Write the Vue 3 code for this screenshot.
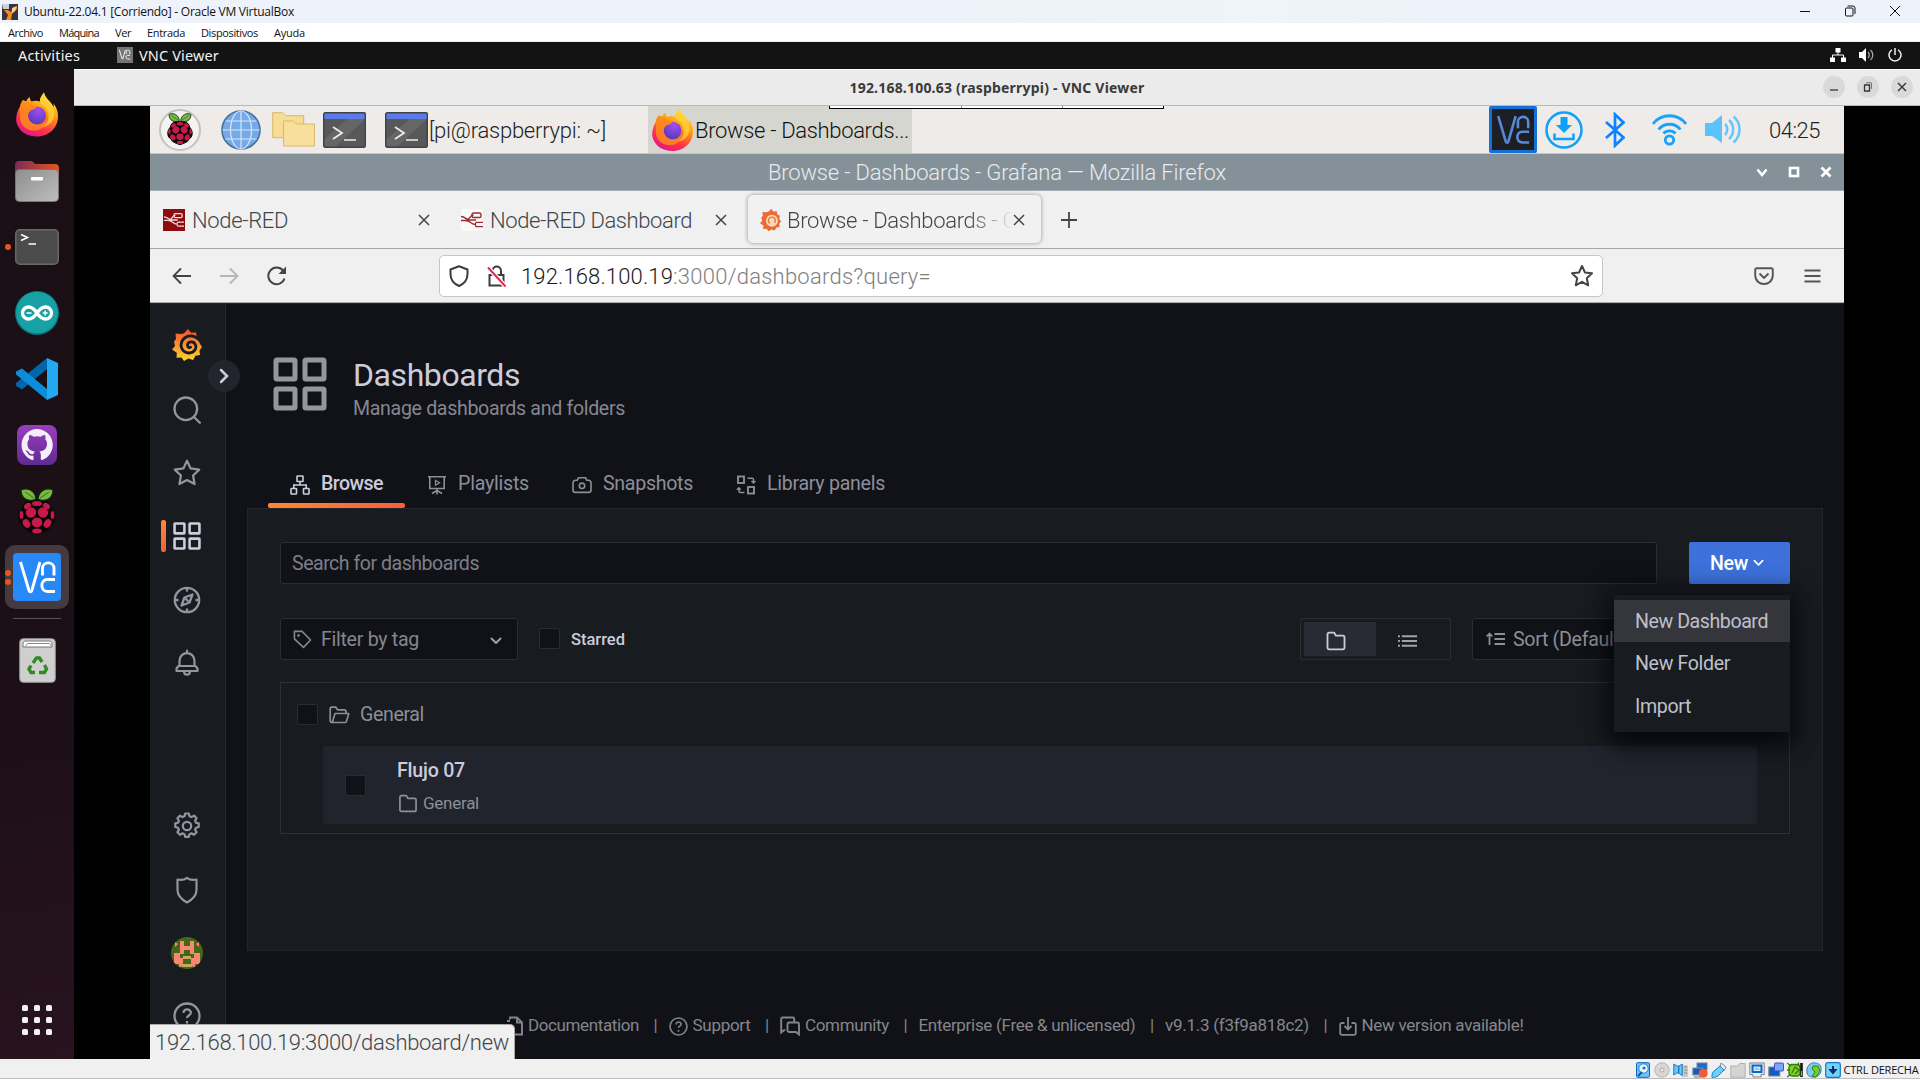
<script setup>
// Sets the advance width of a label by distributing letter spacing over its glyphs.
const vFit = {
  mounted(el, { value }) {
    el.style.display = 'inline-block'
    el.style.whiteSpace = 'nowrap'
    el.style.flex = 'none'
    const natural = el.getBoundingClientRect().width
    const count = el.textContent.trim().length
    el.style.letterSpacing = (value - natural) / count + 'px'
  }
}

const menus = [
  ['Archivo', 35, 16], ['Máquina', 40, 16], ['Ver', 16, 16],
  ['Entrada', 38, 16], ['Dispositivos', 57, 16], ['Ayuda', 31, 0]
].map(([label, width, gap]) => ({ label, width, gap }))

const pageTabs = [
  { label: 'Browse', icon: 'g-sitemap', w: 62, active: true },
  { label: 'Playlists', icon: 'g-present', w: 71 },
  { label: 'Snapshots', icon: 'g-camera', w: 90 },
  { label: 'Library panels', icon: 'g-library', w: 118 }
]

const navTop = ['g-search', 'g-star', 'g-apps', 'g-compass', 'g-bell']
const navBottom = ['g-gear', 'g-shield']
const menuItems = [['New Dashboard', 133], ['New Folder', 95], ['Import', 56]]
const vmIcons = ['v-disk', 'v-cd', 'v-audio', 'v-net', 'v-usb', 'v-folder', 'v-screen', 'v-rec', 'v-cpu', 'v-mouse', 'v-key']
</script>

<template>
  <div class="vm">
    <svg class="defs" aria-hidden="true">
      <defs>
        <linearGradient id="ffo" x1=".8" y1="0" x2=".3" y2="1"><stop offset="0" stop-color="#fff44f" /><stop offset=".4" stop-color="#ff980e" /><stop offset=".72" stop-color="#ff3647" /><stop offset="1" stop-color="#e31587" /></linearGradient>
        <radialGradient id="ffp" cx=".6" cy=".2" r=".9"><stop offset="0" stop-color="#a44cf0" /><stop offset="1" stop-color="#4a3ab8" /></radialGradient>
        <linearGradient id="graf" x1="0" y1="1" x2="0" y2="0"><stop offset="0" stop-color="#fcd71f" /><stop offset=".4" stop-color="#fba03b" /><stop offset="1" stop-color="#f1502a" /></linearGradient>
        <linearGradient id="fold" x1="0" y1="0" x2="1" y2="1"><stop offset="0" stop-color="#8e8e8e" /><stop offset="1" stop-color="#bdbdbd" /></linearGradient>
        <linearGradient id="foldb" x1="0" y1="0" x2="1" y2="0"><stop offset="0" stop-color="#7b2a55" /><stop offset="1" stop-color="#e95420" /></linearGradient>
        <linearGradient id="gith" x1="0" y1="0" x2="0" y2="1"><stop offset="0" stop-color="#9a3ebd" /><stop offset="1" stop-color="#5f2a90" /></linearGradient>
      </defs>
      <symbol id="firefox" viewBox="0 0 42 44">
        <path d="M28 0c-3 4-4.500 6-4 9-3-1-6-1-8.500 0-1-1-2-3-1.500-4.500-2 .8-3 2.500-3.500 4-1.500 0-2.500-.5-3.500-1C5.500 9 4.500 11 4 14c-3 5-4.500 11-3.500 16C3 39 11 44 21 44c12 0 21-9 21-20 0-6-2-10-4.500-13 .3 1.500.3 2.500 0 3.500C35.500 9 29 6 28 0z" fill="url(#ffo)" />
        <path d="M28 0c-3 4-4.500 7-3.500 11 5 3 8 7 8 13 0 6-4 10-8 11 9-1 14-7 14-14 0-3-1-5-2-7C34 9 29 6 28 0z" fill="#ffd43a" opacity=".75" />
        <circle cx="21" cy="23" r="9" fill="url(#ffp)" />
        <path d="M5 11c4-2 8-2 11 1 1.500 1.200 3.500 1.300 5 2-1 3-4 3-6 4-2 1.500-3 3-3 5 0 6 5 9 9 9 5 0 8-2 10-6-1 8-6 12-13 12C9 38 3 31 4 22c0-4 0-8 1-11z" fill="#ff8a1f" opacity=".85" />
      </symbol>
      <symbol id="raspberry" viewBox="0 0 38 48">
        <path d="M19 12C13 9 5 14 4 21c-5 5-5 13 1 17 3 6 9 7 14 9 5-2 11-3 14-9 6-4 6-12 1-17-1-7-9-12-15-9z" fill="#0a0508" />
        <path d="M18 11C15 13 9 13 6 10 4 8 3 5 3 2c6-3 14 0 15 9zM20 11c3 2 9 2 12-1 2-2 3-5 3-8-6-3-14 0-15 9z" fill="#75b843" stroke="#12280a" stroke-width="1.200" />
        <path d="M7 4l9 6M31 4l-9 6" stroke="#2f5c1c" stroke-width=".8" />
        <g fill="#c51a4a"><ellipse cx="19" cy="15.500" rx="5" ry="2.600" /><ellipse cx="9.500" cy="18" rx="3.800" ry="2.800" transform="rotate(-35 9.500 18)" /><ellipse cx="28.500" cy="18" rx="3.800" ry="2.800" transform="rotate(35 28.500 18)" /><ellipse cx="13" cy="24.500" rx="5" ry="5.300" transform="rotate(30 13 24.500)" /><ellipse cx="25" cy="24.500" rx="5" ry="5.300" transform="rotate(-30 25 24.500)" /><ellipse cx="3.500" cy="27" rx="1.900" ry="4" /><ellipse cx="34.500" cy="27" rx="1.900" ry="4" /><ellipse cx="19" cy="34.500" rx="5.300" ry="4.800" /><ellipse cx="8.500" cy="35.500" rx="3.400" ry="4.600" transform="rotate(-35 8.500 35.500)" /><ellipse cx="29.500" cy="35.500" rx="3.400" ry="4.600" transform="rotate(35 29.500 35.500)" /><ellipse cx="19" cy="43" rx="4.800" ry="2.500" /></g>
      </symbol>
      <symbol id="vnc" viewBox="0 0 48 48"><path d="M7.500 9l8.500 28.500c.6 1.700 2.200 1.700 2.800 0L27 9M29.500 22.500v-7c0-7.500 11.500-7.500 11.500 0v7M42 26.500h-7.500c-7.500 0-7.500 12 0 12H42" fill="none" stroke="currentColor" stroke-width="2.900" /></symbol>
      <symbol id="piterm" viewBox="0 0 43 36"><rect x=".7" y=".7" width="41.600" height="34.600" rx="1.500" fill="#585858" /><path d="M.7 28L32 0h10.300v7L12 35H.7z" fill="#707070" opacity=".6" /><path d="M1 1h41v6H1z" fill="#5b7be8" /><rect x=".7" y=".7" width="41.600" height="34.600" rx="1.500" fill="none" stroke="#3f4247" stroke-width="1.400" /><path d="M10 15l9 6-9 6M21 28h12" fill="none" stroke="#eee" stroke-width="1.700" /></symbol>
      <symbol id="nodered" viewBox="0 0 22 22"><path d="M0 11.500h4.500c4.500 0 4-5.500 8-5.500M4.500 11.500c5 0 5 4 9.500 4M0 7.500c4 0 5 3 8 3.500h7" fill="none" stroke="currentColor" stroke-width="1.400" /><rect x="11" y="4" width="9" height="4.500" rx="1.500" fill="none" stroke="currentColor" stroke-width="1.400" /><path d="M22 13.300h-6.500c-1.500 0-1.500 4.400 0 4.400H22" fill="none" stroke="currentColor" stroke-width="1.300" /></symbol>
      <symbol id="grafana" viewBox="0 0 30 32">
        <path d="M16 0l3 3.800 5-.3.800 4.500 3.700 2-1 4L30 18l-2.500 3.500L28 26l-4.500.8L21 31l-4.500-1.500L12 32l-2.500-3.500-5 .3.300-5L0 20.500 3 17l-1-4.500L4 10l-.5-5.500 5.500.5 3-.8z" fill="url(#graf)" />
        <path d="M29 13C24 5.500 15.500 5.500 11.500 10c-5 5.500-1.800 14 5.500 14 5.500 0 8-5 6.300-8.500-1.800-3.800-7.300-3.200-7.800.5-.2 2 1.700 3.200 3 2.200" fill="none" stroke="#181b1f" stroke-width="2.800" stroke-linecap="round" />
      </symbol>
      <symbol id="close" viewBox="0 0 12 12"><path d="M1 1l10 10M11 1L1 11" fill="none" stroke="currentColor" stroke-width="1.500" /></symbol>

      <symbol id="g-search" viewBox="0 0 28 28"><g fill="none" stroke="currentColor" stroke-width="2.300" stroke-linecap="round"><circle cx="12.800" cy="12.800" r="11.300" /><path d="M21 21l5.800 5.800" /></g></symbol>
      <symbol id="g-star" viewBox="0 0 24 24"><path d="M12 1.500l3.100 6.600 7.400 1-5.300 5.100 1.300 7.300L12 18l-6.500 3.500 1.300-7.300L1.500 9.100l7.400-1z" fill="none" stroke="currentColor" stroke-width="1.900" stroke-linejoin="round" /></symbol>
      <symbol id="g-apps" viewBox="0 0 54 54"><g fill="none" stroke="currentColor" stroke-width="5"><rect x="3" y="3" width="19" height="19" rx="1" /><rect x="32" y="3" width="19" height="19" rx="1" /><rect x="3" y="32" width="19" height="19" rx="1" /><rect x="32" y="32" width="19" height="19" rx="1" /></g></symbol>
      <symbol id="g-compass" viewBox="0 0 28 28"><g fill="none" stroke="currentColor" stroke-width="2.300"><circle cx="14" cy="14" r="12.200" /><path d="M14 2v3.500M14 22.500V26M2 14h3.500M22.500 14H26M19.500 8.500l-3 8-8 3 3-8z" stroke-linejoin="round" /><path d="M12.500 12.500l3 3" /></g></symbol>
      <symbol id="g-bell" viewBox="0 0 28 28"><g fill="none" stroke="currentColor" stroke-width="2.200" stroke-linejoin="round" stroke-linecap="round"><path d="M14 1.500V4M6.500 17v-5c0-10.500 15-10.500 15 0v5M5.500 17h17l2 2.500V22H3.500v-2.500zM11 22c0 5 6 5 6 0" /></g></symbol>
      <symbol id="g-gear" viewBox="0 0 28 28"><g fill="none" stroke="currentColor" stroke-width="2.200" stroke-linejoin="round"><path d="M11.500 4.200L12.200 1.500h3.600l.7 2.700 2 .9 2.500-1.500 2.600 2.600-1.500 2.400.9 2.100 2.700.7v3.600l-2.700.7-.9 2 1.500 2.500-2.600 2.600-2.400-1.500-2.100.9-.7 2.700h-3.600l-.7-2.700-2-.9-2.500 1.500-2.600-2.600 1.500-2.400-.9-2.100-2.700-.7v-3.600l2.700-.7.900-2-1.500-2.500L7 3.600l2.400 1.500z" /><circle cx="14" cy="14" r="4.200" /></g></symbol>
      <symbol id="g-shield" viewBox="0 0 28 28"><path d="M14 1.800c-2.500 2-6 2.500-9.500 1.700V14c0 5.500 4 9.500 9.500 12.500 5.500-3 9.500-7 9.500-12.500V3.500C20 4.300 16.500 3.800 14 1.800z" fill="none" stroke="currentColor" stroke-width="2.200" stroke-linejoin="round" /></symbol>
      <symbol id="g-help" viewBox="0 0 28 28"><g fill="none" stroke="currentColor" stroke-width="2.300"><circle cx="14" cy="14" r="12.500" /><path d="M10.500 11c0-5 7.500-4.500 7.300-.2-.2 2.800-3.800 2.600-3.800 5.200M14 19v2.600" /></g></symbol>
      <symbol id="g-sitemap" viewBox="0 0 20 20"><g fill="none" stroke="currentColor" stroke-width="1.600"><rect x="7" y="1" width="6" height="5.500" rx=".6" /><rect x="1" y="13.500" width="5.500" height="5.500" rx=".6" /><rect x="13.500" y="13.500" width="5.500" height="5.500" rx=".6" /><path d="M10 6.500V10M3.800 13.500V10h12.400v3.500" /></g></symbol>
      <symbol id="g-present" viewBox="0 0 20 20"><g fill="none" stroke="currentColor" stroke-width="1.600"><path d="M1 1.800h18M2.800 2v11.500h14.400V2M10 13.500v6M5 18.500l5-3 5 3" /><path d="M8.500 5.300v4.900l4-2.400z" stroke-width="1.300" /></g></symbol>
      <symbol id="g-camera" viewBox="0 0 20 20"><g fill="none" stroke="currentColor" stroke-width="1.600"><path d="M1 8c0-2 .8-2.800 2.800-2.800h1.500L6.500 2.800h7l1.200 2.400h1.500C18.200 5.200 19 6 19 8v7c0 1.600-.8 2.400-2.400 2.400H3.400C1.800 17.400 1 16.600 1 15z" /><circle cx="10" cy="10.800" r="2.700" /></g></symbol>
      <symbol id="g-library" viewBox="0 0 20 20"><g fill="none" stroke="currentColor"><rect x="2" y="1.500" width="6" height="6.500" stroke-width="1.900" /><rect x="12" y="12" width="6" height="6.500" stroke-width="1.900" /><path d="M11.500 3.300h4.700c1 0 1.300.5 1.300 1.500v3M15.500 6l2 2 2-2M8.500 17.500H4.200c-1 0-1.300-.5-1.300-1.500v-3M.8 14.800l2-2 2 2" stroke-width="1.400" /></g></symbol>
      <symbol id="g-tag" viewBox="0 0 20 20"><path d="M1.500 1.500h8l9 9-7.500 7.800-9.500-9z" fill="none" stroke="currentColor" stroke-width="1.700" stroke-linejoin="round" /><circle cx="5.800" cy="5.800" r="1.400" fill="currentColor" /></symbol>
      <symbol id="g-down" viewBox="0 0 12 8"><path d="M1.500 1.500L6 6l4.500-4.500" fill="none" stroke="currentColor" stroke-width="1.900" stroke-linecap="round" stroke-linejoin="round" /></symbol>
      <symbol id="g-folder" viewBox="0 0 20 20"><path d="M1.500 3.500c0-1.200.5-1.800 1.700-1.800h5L10 4.700h6.800c1.200 0 1.700.6 1.700 1.800v10c0 1.200-.5 1.800-1.700 1.800H3.200c-1.200 0-1.700-.6-1.700-1.800z" fill="none" stroke="currentColor" stroke-width="1.800" stroke-linejoin="round" /></symbol>
      <symbol id="g-open" viewBox="0 0 21 18"><path d="M3.500 16.500c-1.500 0-2.300-.7-2.300-2V3c0-1.200.5-1.800 1.700-1.800h4L8.500 3.800h6.800c1.200 0 1.700.6 1.700 1.700v2M3.300 16.500L6 7.500h13.800l-2.300 7.700c-.3.900-.8 1.300-1.700 1.300z" fill="none" stroke="currentColor" stroke-width="1.700" stroke-linejoin="round" /></symbol>
      <symbol id="g-list" viewBox="0 0 20 14"><path d="M0 2h2M4 2h16M0 7h2M4 7h16M0 12h2M4 12h16" stroke="currentColor" stroke-width="1.900" /></symbol>
      <symbol id="g-sort" viewBox="0 0 19 14"><path d="M3.500 13V1.500M.7 4.500l2.800-3 2.800 3M8.500 2H19M8.500 7H19M8.500 12H19" fill="none" stroke="currentColor" stroke-width="1.800" /></symbol>
      <symbol id="g-doc" viewBox="0 0 18 20"><path d="M5 3.500V1.500h7l5 5v12H7M12 1.500v5h5M2 5h3" fill="none" stroke="currentColor" stroke-width="1.900" /></symbol>
      <symbol id="g-chat" viewBox="0 0 20 20"><path d="M5 13.500l-3.800 3V3c0-1 .5-1.500 1.500-1.500h10c1 0 1.500.5 1.500 1.500v3M7.500 8c0-1 .5-1.500 1.500-1.500h8.500c1 0 1.500.5 1.500 1.500v10.500L16 16H9c-1 0-1.500-.5-1.500-1.500z" fill="none" stroke="currentColor" stroke-width="1.900" /></symbol>
      <symbol id="g-import" viewBox="0 0 18 20"><path d="M9 1v12.500M5.500 10L9 13.500l3.500-3.500M5.500 7H3C2 7 1.200 7.600 1.200 9v8c0 1 .6 1.800 1.800 1.800h12c1.200 0 1.800-.8 1.800-1.800V9c0-1.400-.8-2-1.800-2h-2.500" fill="none" stroke="currentColor" stroke-width="1.800" /></symbol>

      <symbol id="v-disk" viewBox="0 0 16 16"><rect x="1.500" y=".7" width="13" height="14.600" rx="1" fill="#6cc4f8" stroke="#0869c8" /><circle cx="8.500" cy="6.500" r="4.700" fill="#eaf7ff" stroke="#1c7bd0" /><circle cx="9" cy="6" r="1.600" fill="#1a74cd" /><path d="M3 14l4-4" stroke="#0b58ac" stroke-width="2" /></symbol>
      <symbol id="v-cd" viewBox="0 0 16 16"><circle cx="8" cy="8" r="7.200" fill="#d7d7d7" stroke="#b5b5b5" /><circle cx="8" cy="8" r="2" fill="#eee" stroke="#aaa" /></symbol>
      <symbol id="v-audio" viewBox="0 0 16 16"><path d="M9 3h5l1 1v11H9z" fill="#c9c9c9" /><path d="M11 5h3M11 8h3M11 11h3" stroke="#888" /><path d="M.8 2v11l3-2h2V4H4zM5.500 4.500L9.200 2v11.500l-3.700-2.500z" fill="#69c8fa" stroke="#1674c4" /></symbol>
      <symbol id="v-net" viewBox="0 0 16 16"><rect x="5" y="1" width="10" height="7" fill="#1a6ad0" stroke="#808080" /><rect x=".8" y="6" width="10" height="7" fill="#0d5dc4" stroke="#909090" /><path d="M2 15h7" stroke="#777" /><circle cx="11.200" cy="11.200" r="4.500" fill="#f25a35" /></symbol>
      <symbol id="v-usb" viewBox="0 0 16 16"><path d="M10 1l5 4-2 4-4-4z" fill="#eee" stroke="#888" /><path d="M9 4l4 4-6 6c-2 1.500-6 1.500-6 1.500S.5 11 3 9z" fill="#6cd0fa" stroke="#1682c8" /></symbol>
      <symbol id="v-folder" viewBox="0 0 16 16"><path d="M.8 4h7l2-2.500h5.400v13.700H.8z" fill="#d4d4d4" stroke="#b0b0b0" /></symbol>
      <symbol id="v-screen" viewBox="0 0 16 16"><path d="M.8 1h14.400v11.500H12V15H4v-2.500H.8z" fill="#eee" stroke="#808080" /><rect x="2.500" y="2.500" width="11" height="8.500" fill="#1065cc" /><rect x="5" y="5" width="6" height="3.500" fill="#8dccff" stroke="#fff" stroke-width=".8" /></symbol>
      <symbol id="v-rec" viewBox="0 0 16 16"><rect x=".8" y="5" width="11" height="9" fill="#0d5dc4" stroke="#888" /><rect x="6.500" y="1" width="9" height="8" rx="1" fill="#7ea5f7" stroke="#3657bd" /></symbol>
      <symbol id="v-cpu" viewBox="0 0 16 16"><rect x="2" y="2.500" width="11" height="11.500" rx="3" fill="#7ed321" stroke="#2f7d0d" stroke-width="1.300" /><path d="M0 1l4 3M12 .5l-2 3M0 15l4-3M0 8h3M5 11l3-6 4 3-4 4" fill="none" stroke="#2c7b15" stroke-width="1.300" /><path d="M14.500 1v14" stroke="#111" stroke-width="2.600" /><path d="M14.600 9v5" stroke="#74e019" stroke-width="1" /></symbol>
      <symbol id="v-mouse" viewBox="0 0 16 16"><path d="M1 10C0 5 4 0 9 1c4 0 7 3 6 7 0 5-5 8-8 7-4 0-6-2-6-5z" fill="#7ccaf5" stroke="#2d83bd" /><path d="M7 4h5l2 5-4 6-4-1 3-4-3-3z" fill="#74cb2a" stroke="#348415" /></symbol>
      <symbol id="v-key" viewBox="0 0 16 16"><rect x=".7" y=".7" width="14.600" height="14.600" rx="2" fill="#72d1ff" stroke="#1776bd" stroke-width="1.200" /><path d="M8 4v5M5.500 8L8 11l2.500-3z" fill="#04356f" stroke="#04356f" stroke-width="2" /></symbol>
    </svg>

    <header class="win-title">
      <svg class="vb-icon" viewBox="0 0 16 16"><path d="M0 0h16v16H0z" fill="#34353f" /><path d="M0 0h7v5H1z" fill="#cdd2dd" /><path d="M2 6l4 5-2 5h5l1-6 5-5V3l-4 1-2 4-3-2z" fill="#f28c22" /><path d="M10 4l5-2-2 5-3 2z" fill="#ffd08a" /></svg>
      <span v-fit="270">Ubuntu-22.04.1 [Corriendo] - Oracle VM VirtualBox</span>
      <div class="win-controls">
        <svg width="12" height="12" viewBox="0 0 12 12"><path d="M1 6.500h10" stroke="#111" /></svg>
        <svg width="12" height="12" viewBox="0 0 12 12" fill="none" stroke="#111"><rect x="1.500" y="3" width="7.500" height="8" rx="1" /><path d="M3.500 1h5.500a2 2 0 0 1 2 2v6" /></svg>
        <svg width="12" height="12" viewBox="0 0 12 12"><path d="M1 1l10 10M11 1L1 11" stroke="#111" /></svg>
      </div>
    </header>

    <nav class="win-menu">
      <span v-for="m in menus" :key="m.label" v-fit="m.width" :style="{ marginRight: m.gap + 'px' }">{{ m.label }}</span>
    </nav>

    <div class="gnome">
      <span v-fit="62">Activities</span>
      <div class="vnc-mini"><svg width="15" height="15"><use href="#vnc" /></svg></div>
      <span v-fit="80">VNC Viewer</span>
      <div class="gnome-tray">
        <svg width="16" height="14" viewBox="0 0 16 14"><path d="M5.500 0h5v4.500h-5zM0 9.500h5V14H0zM11 9.500h5V14h-5z" fill="#fff" /><path d="M8 4v3M2.500 10V7h11v3" fill="none" stroke="#fff" /></svg>
        <svg width="16" height="14" viewBox="0 0 16 14"><path d="M0 4h3l4-4v14l-4-4H0z" fill="#fff" /><path d="M9 4c1.700 1.500 1.700 4.500 0 6M11.500 2c3 2.500 3 7.500 0 10" fill="none" stroke="#aaa" stroke-width="1.300" /></svg>
        <svg width="14" height="14" viewBox="0 0 14 14"><path d="M7 0v7M4 1.800a6 6 0 1 0 6 0" fill="none" stroke="#eee" stroke-width="1.500" /></svg>
      </div>
    </div>

    <div class="desktop">
      <aside class="dock">
        <svg class="d-firefox"><use href="#firefox" /></svg>
        <svg class="d-files" viewBox="0 0 44 41"><path d="M0 5c0-3 1-5 4-5h12c2 0 3 3 5 3h19c3 0 4 2 4 5v14H0z" fill="url(#foldb)" /><rect x=".5" y="8.500" width="43" height="32" rx="4" fill="url(#fold)" stroke="#777" /><rect x="16" y="16" width="12" height="3.500" rx="1" fill="#fff" /></svg>
        <div class="d-run">
          <i class="dot"></i>
          <svg width="44" height="36" viewBox="0 0 44 36"><rect x=".8" y=".8" width="42.400" height="34.400" rx="4" fill="#4b4b4b" stroke="#686868" stroke-width="1.500" /><path d="M6 5.500l6.500 3L6 11.500M13.500 15H21" fill="none" stroke="#fff" stroke-width="1.600" /></svg>
        </div>
        <svg class="d-arduino" viewBox="0 0 44 44"><circle cx="22" cy="22" r="22" fill="#077b80" /><circle cx="22" cy="21.500" r="20.800" fill="#17a1a5" /><path d="M22 22c-3-4.500-5-6-8.500-6a6 6 0 0 0 0 12c3.500 0 5.500-1.500 8.500-6zm0 0c3 4.500 5 6 8.500 6a6 6 0 0 0 0-12c-3.500 0-5.500 1.500-8.500 6z" fill="none" stroke="#fff" stroke-width="3.300" /><path d="M11.500 22h5M27.700 22h5M30.200 19.500v5" stroke="#fff" stroke-width="1.500" /></svg>
        <svg class="d-code" viewBox="0 0 42 42"><path d="M31 0v11L6 31.500 0 28v-3z" fill="#0065a9" /><path d="M31 42V31L6 10.500 0 13.500v3z" fill="#0c8ddb" /><path d="M31 0l11 5v32l-11 5z" fill="#24a8f2" /></svg>
        <svg class="d-github" viewBox="0 0 40 40"><rect width="40" height="40" rx="8" fill="url(#gith)" /><path d="M20 4a16 16 0 0 0-5 31c1 .2 1.500-.2 1.500-1v-3.500c-4.500 1-5.500-1.800-6.300-3.200-.5-.8-1.200-1-1.700-1.600 2-.7 3 1 4 2.500 1.200 1.400 2.800 1.300 4 .7.200-1.200.8-1.800 1.400-2.400-4-.5-7.500-2.300-7.500-8 0-1.800.7-3.200 1.700-4.300-.2-1-.5-2.500.3-4.200 1.800 0 3.300 1 4.300 1.700a15 15 0 0 1 7 0c1-.7 2.500-1.700 4.300-1.700.8 1.700.5 3.200.3 4.200 1 1.100 1.700 2.500 1.700 4.300 0 5.700-3.500 7.500-7.500 8 .8.8 1.300 1.800 1.300 3.500v4c0 .8.500 1.200 1.500 1A16 16 0 0 0 20 4z" fill="#f4effa" /></svg>
        <svg class="d-rasp"><use href="#raspberry" /></svg>
        <div class="d-vnc"><i class="dot one"></i><i class="dot two"></i><div class="vnc-tile"><svg width="48" height="48"><use href="#vnc" /></svg></div></div>
        <hr class="d-sep" />
        <svg class="d-trash" viewBox="0 0 37 45"><rect x=".7" y=".7" width="35.600" height="43.600" rx="3.500" fill="#cfcfcf" stroke="#969696" /><path d="M4 9V6.500C4 4 5 3 7 3h23c2 0 3 1 3 3.500V9z" fill="#fff" stroke="#777" /><path d="M6.500 8.500l2-3h22l2 2.500" fill="none" stroke="#888" /><g fill="none" stroke="#2f8b25" stroke-width="3.400"><path d="M14 25l3.500-5h3l2.500 4" /><path d="M25.500 27l2 4-2 3.500H20" /><path d="M16 34.500h-4l-2-3.500 2-3.500" /></g></svg>
        <div class="d-apps"><i v-for="n in 9" :key="n"></i></div>
      </aside>

      <section class="viewer">
        <div class="viewer-bar">
          <span class="viewer-title" v-fit="295">192.168.100.63 (raspberrypi) - VNC Viewer</span>
          <div class="viewer-btns">
            <i><svg width="10" height="10" viewBox="0 0 10 10"><path d="M1 8h8" stroke="#333" stroke-width="1.300" /></svg></i>
            <i><svg width="10" height="10" viewBox="0 0 10 10" fill="none" stroke="#333"><path d="M1.500 3h5v6h-5z" stroke-width="1.300" /><path d="M3 .8h5.500V7" stroke="#777" /></svg></i>
            <i><svg width="10" height="10" viewBox="0 0 10 10"><path d="M1 1l8 8M9 1L1 9" stroke="#333" stroke-width="1.400" /></svg></i>
          </div>
        </div>

        <div class="screen">
          <div class="peek"><b></b><b></b><b></b></div>
          <div class="pi-panel">
            <div class="pi-menu"><svg width="26" height="33"><use href="#raspberry" /></svg></div>
            <svg class="globe" viewBox="0 0 40 40"><circle cx="20" cy="20" r="19" fill="#77a9e8" stroke="#45719f" stroke-width="1.600" /><g fill="none" stroke="#d5e7fa" stroke-width="1.200"><path d="M20 1v38M1.500 20h37M4.500 11h31M4.500 29h31" /><ellipse cx="20" cy="20" rx="10.500" ry="19" /></g></svg>
            <svg class="folders" viewBox="0 0 43 35"><path d="M.7.700h10l3 3h18v22H.7z" fill="#f7dc94" stroke="#d8b96b" /><path d="M11.500 9h10l3 3h18v22h-31z" fill="#f8df9c" stroke="#d8b96b" /></svg>
            <svg class="term-a"><use href="#piterm" /></svg>
            <svg class="term-b"><use href="#piterm" /></svg>
            <span class="pi-text" v-fit="177">[pi@raspberrypi: ~]</span>
            <div class="task">
              <svg width="41" height="43"><use href="#firefox" /></svg>
              <span v-fit="214">Browse - Dashboards...</span>
            </div>
            <div class="pi-tray">
              <div class="tray-vnc"><svg width="44" height="43"><use href="#vnc" /></svg></div>
              <svg width="38" height="38" viewBox="0 0 38 38"><circle cx="19" cy="19" r="17.500" fill="none" stroke="#0fa1fa" stroke-width="2.500" /><path d="M15.500 6h7v8H27l-8 8-8-8h4.500z" fill="#0fa1fa" /><path d="M9.500 22.500v5.500h19v-5.500" fill="none" stroke="#0fa1fa" stroke-width="2.500" /></svg>
              <svg class="bt" width="20" height="36" viewBox="0 0 20 36"><path d="M1 10l17.500 15.500L10 33.500V2.500l8.500 8L1 26" fill="none" stroke="#0a84ff" stroke-width="2.700" /></svg>
              <svg class="wifi" width="35" height="32" viewBox="0 0 35 32"><g fill="none" stroke="#18a2fa" stroke-width="2.800"><path d="M1 10C9-1 26-1 34 10M6.500 15.500c5.500-7 16.500-7 22 0M11.500 19.500c3-3.500 9-3.500 12 0" /><circle cx="17.500" cy="26" r="4.200" /></g></svg>
              <svg class="vol" width="36" height="32" viewBox="0 0 36 32"><path d="M0 9h7L17 1v28L7 22H0z" fill="#5bc3fb" /><g fill="none" stroke="#66c6fa" stroke-width="2.500"><path d="M20 10c3 2.500 3 8 0 11M24 6c5.500 4.500 5.500 14.500 0 19M28.500 2.500c8 6.500 8 19.500 0 26" /></g></svg>
              <span class="clock" v-fit="51">04:25</span>
            </div>
          </div>

          <div class="ff-title">
            <span v-fit="458">Browse - Dashboards - Grafana — Mozilla Firefox</span>
            <div class="ff-ctl">
              <svg width="12" height="12" viewBox="0 0 12 12"><path d="M1.500 3.500L6 9l4.500-5.500" fill="none" stroke="#fff" stroke-width="2.600" /></svg>
              <svg width="12" height="12" viewBox="0 0 12 12"><rect x="2" y="2" width="8" height="8" fill="none" stroke="#fff" stroke-width="2.600" /></svg>
              <svg width="12" height="12" viewBox="0 0 12 12"><path d="M1.500 1.500l9 9M10.500 1.500l-9 9" stroke="#fff" stroke-width="2.800" /></svg>
            </div>
          </div>

          <div class="ff-tabs">
            <div class="ff-tab first"><i class="nr red"><svg width="20" height="20"><use href="#nodered" /></svg></i><span v-fit="96">Node-RED</span><svg class="x"><use href="#close" /></svg></div>
            <div class="ff-tab second"><i class="nr"><svg width="22" height="22"><use href="#nodered" /></svg></i><span v-fit="202">Node-RED Dashboard</span><svg class="x"><use href="#close" /></svg></div>
            <div class="ff-tab third"><svg class="gicon" viewBox="0 0 30 32"><path d="M16 0l3 3.800 5-.3.800 4.500 3.700 2-1 4L30 18l-2.500 3.500L28 26l-4.500.8L21 31l-4.500-1.500L12 32l-2.500-3.500-5 .3.300-5L0 20.500 3 17l-1-4.500L4 10l-.5-5.500 5.500.5 3-.8z" fill="#ee6a35" /><circle cx="17" cy="17" r="8.500" fill="#f8d8b8" /><path d="M14 21a5 5 0 1 1 7-1" fill="none" stroke="#e5783a" stroke-width="2" /></svg><div class="fade"><span v-fit="230">Browse - Dashboards - G</span></div><svg class="x"><use href="#close" /></svg></div>
            <svg class="plus" viewBox="0 0 16 16"><path d="M8 0v16M0 8h16" stroke="#444" stroke-width="1.800" /></svg>
          </div>

          <div class="ff-nav">
            <svg class="n-back" viewBox="0 0 20 18"><path d="M19 9H2M9 1.500L1.500 9 9 16.500" fill="none" stroke="#444" stroke-width="1.800" /></svg>
            <svg class="n-fwd" viewBox="0 0 20 18"><path d="M1 9h17M11 1.500L18.500 9 11 16.500" fill="none" stroke="#b5b5b5" stroke-width="1.800" /></svg>
            <svg class="n-rel" viewBox="0 0 20 20"><path d="M17.500 12.500A8.300 8.300 0 1 1 16 4.500" fill="none" stroke="#444" stroke-width="2" /><path d="M19 .5V8h-7.500z" fill="#444" /></svg>
            <div class="url">
              <svg class="u-shield" viewBox="0 0 20 22"><path d="M10 1.300L18.500 4.500V9c0 6-4 10-8.500 12C5.500 19 1.500 15 1.500 9V4.500z" fill="none" stroke="#3c3c3c" stroke-width="2" stroke-linejoin="round" /></svg>
              <svg class="u-lock" viewBox="0 0 20 22"><path d="M2.500 10h14v10.500h-14zM5.500 10V6c0-6 8.500-6 8.500 0v4" fill="none" stroke="#3c3c3c" stroke-width="2" /><path d="M1 2.500l17.500 19" stroke="#fff" stroke-width="4.500" /><path d="M1 2.500l17.500 19" stroke="#e8264d" stroke-width="2" /></svg>
              <span class="host" v-fit="152">192.168.100.19</span><span class="path" v-fit="258">:3000/dashboards?query=</span>
              <svg class="u-star" viewBox="0 0 24 24"><path d="M12 2l3 6.500 7 .8-5.200 4.900 1.400 7.100L12 17.800l-6.200 3.500 1.400-7.100L2 9.300l7-.8z" fill="none" stroke="#444" stroke-width="2" stroke-linejoin="round" /></svg>
            </div>
            <svg class="pocket" viewBox="0 0 20 18"><path d="M1.200 3c0-1.200.6-1.800 1.800-1.800h14c1.200 0 1.800.6 1.800 1.800v5c0 12-17.600 12-17.600 0zM5.500 6.500L10 11l4.500-4.500" fill="none" stroke="#555" stroke-width="1.900" /></svg>
            <svg class="burger" viewBox="0 0 16 14"><path d="M0 1.500h16M0 7h16M0 12.500h16" stroke="#555" stroke-width="1.800" /></svg>
          </div>

          <div class="grafana">
            <aside class="side">
              <div class="slot logo"><svg width="30" height="32"><use href="#grafana" /></svg></div>
              <div v-for="i in navTop" :key="i" class="slot" :class="{ on: i === 'g-apps' }"><svg width="28" height="28"><use :href="'#' + i" /></svg></div>
              <div class="side-gap"></div>
              <div v-for="i in navBottom" :key="i" class="slot"><svg width="28" height="28"><use :href="'#' + i" /></svg></div>
              <div class="slot"><svg width="32" height="32" viewBox="0 0 32 32"><clipPath id="av"><circle cx="16" cy="16" r="16" /></clipPath><g clip-path="url(#av)"><path d="M0 0h32v32H0z" fill="#466617" /><path d="M9 4h4v5h6V4h4v13h-4v-4h-6v4H9zM3 16h6v5h3v5l-2 4H8v-3H3zM29 16h-6v5h-3v5l2 4h2v-3h5zM4 5l3 2-3 3zM28 5l-3 2 3 3z" fill="#fb8772" /><path d="M12 19h8v3h-8zM11 27h10v3H11z" fill="#c5a95e" /></g></svg></div>
              <div class="slot"><svg width="28" height="28"><use href="#g-help" /></svg></div>
              <div class="expand"><svg width="10" height="16" viewBox="0 0 10 16"><path d="M2 2l6 6-6 6" fill="none" stroke="#ccccdc" stroke-width="2.500" stroke-linecap="round" /></svg></div>
            </aside>

            <main class="page">
              <div class="head">
                <svg width="54" height="54"><use href="#g-apps" /></svg>
                <div class="head-text"><h1 v-fit="167">Dashboards</h1><p v-fit="272">Manage dashboards and folders</p></div>
              </div>
              <div class="tabs">
                <div v-for="t in pageTabs" :key="t.label" class="tab" :class="{ active: t.active }"><svg width="20" height="20"><use :href="'#' + t.icon" /></svg><span v-fit="t.w">{{ t.label }}</span></div>
              </div>

              <div class="panel">
                <div class="row-search">
                  <div class="input"><span v-fit="187">Search for dashboards</span></div>
                  <button class="new"><span v-fit="38">New</span><svg width="11" height="8"><use href="#g-down" /></svg></button>
                </div>
                <div class="row-filter">
                  <div class="select"><svg width="19" height="19"><use href="#g-tag" /></svg><span v-fit="98">Filter by tag</span><svg class="end" width="12" height="8"><use href="#g-down" /></svg></div>
                  <i class="check"></i><b class="starred" v-fit="54">Starred</b>
                  <div class="toggle"><div class="seg sel"><svg width="20" height="20"><use href="#g-folder" /></svg></div><div class="seg"><svg width="19" height="14"><use href="#g-list" /></svg></div></div>
                  <div class="sort"><svg width="19" height="14"><use href="#g-sort" /></svg><span v-fit="154">Sort (Default A–Z)</span></div>
                </div>
                <div class="results">
                  <div class="group"><i class="check"></i><svg width="21" height="18"><use href="#g-open" /></svg><span v-fit="64">General</span></div>
                  <div class="item">
                    <i class="check"></i>
                    <div class="item-text"><strong v-fit="68">Flujo 07</strong><div class="sub"><svg width="20" height="19"><use href="#g-folder" /></svg><span v-fit="56">General</span></div></div>
                  </div>
                </div>
                <div class="dropdown"><div v-for="(m, n) in menuItems" :key="m[0]" class="opt" :class="{ hover: n === 0 }"><span v-fit="m[1]">{{ m[0] }}</span></div></div>
              </div>

              <footer class="foot">
                <svg width="18" height="20"><use href="#g-doc" /></svg><span v-fit="111">Documentation</span><em>|</em>
                <svg width="19" height="19"><use href="#g-help" /></svg><span v-fit="58">Support</span><em>|</em>
                <svg width="20" height="20"><use href="#g-chat" /></svg><span v-fit="84">Community</span><em>|</em>
                <span v-fit="217">Enterprise (Free &amp; unlicensed)</span><em>|</em>
                <span v-fit="144">v9.1.3 (f3f9a818c2)</span><em>|</em>
                <svg width="18" height="20"><use href="#g-import" /></svg><span v-fit="162">New version available!</span>
              </footer>
            </main>
            <div class="link-tip"><span v-fit="354">192.168.100.19:3000/dashboard/new</span></div>
          </div>
        </div>
      </section>
    </div>

    <div class="vm-status">
      <svg v-for="i in vmIcons" :key="i" width="16" height="16"><use :href="'#' + i" /></svg>
      <span v-fit="75">CTRL DERECHA</span>
    </div>
  </div>
</template>

<style>
html, body { margin: 0; background: #fff; overflow: hidden; }
</style>

<style scoped>
* { box-sizing: border-box; }
svg { display: block; flex: none; }
i, em { font-style: normal; display: block; }
.defs { position: absolute; width: 0; height: 0; }
.vm { width: 1920px; height: 1080px; display: flex; flex-direction: column; overflow: hidden; background: #fff; font-family: Roboto, "Liberation Sans", sans-serif; }

.win-title { height: 23px; flex: none; display: flex; align-items: center; padding: 0 10px 0 2px; background: linear-gradient(90deg, #eef3fb 50%, #eef4f7 66%, #eef3fb 74%); font: 12px "Open Sans", sans-serif; color: #111; }
.vb-icon { width: 16px; height: 16px; margin: 0 6px 0 0; }
.win-controls { margin-left: auto; display: flex; gap: 33px; padding: 0 9px 2px 0; }
.win-menu { height: 19px; flex: none; display: flex; align-items: center; padding: 1px 0 0 8px; border-bottom: 1px solid #f0f0f0; font: 11px "Open Sans", sans-serif; color: #111; }
.gnome { height: 27px; flex: none; background: #131313; display: flex; align-items: center; padding: 0 0 2px 18px; color: #f2f2f2; font: 14.500px "Noto Sans", sans-serif; }
.vnc-mini { width: 16px; height: 16px; background: #757575; color: #fff; margin: 0 6px 0 37px; }
.gnome-tray { margin: 0 18px 0 auto; display: flex; gap: 13px; }

.desktop { height: 990px; flex: none; display: flex; }
.dock { width: 74px; flex: none; display: flex; flex-direction: column; align-items: center; background: linear-gradient(170deg, #1b0f16 0, #1c0f17 65%, #28131f 100%); }
.d-firefox { width: 42px; height: 45px; margin-top: 23px; }
.d-files { width: 44px; height: 41px; margin-top: 24px; }
.d-run { position: relative; margin-top: 27px; }
.dot { position: absolute; width: 6px; height: 6px; border-radius: 3px; background: #e95420; left: -10px; top: 15px; }
.d-arduino { width: 44px; height: 44px; margin-top: 26px; }
.d-code { width: 42px; height: 42px; margin-top: 23px; }
.d-github { width: 40px; height: 40px; margin-top: 25px; }
.d-rasp { width: 38px; height: 48px; margin-top: 23px; }
.d-vnc { position: relative; width: 64px; height: 64px; border-radius: 10px; background: #463a41; margin-top: 9px; padding: 8px; }
.vnc-tile { width: 48px; height: 48px; border-radius: 4px; background: #2789f5; color: #fff; }
.dot.one { left: 0; top: 25px; }
.dot.two { left: 0; top: 34px; }
.d-sep { width: 48px; height: 1px; border: 0; background: #5a5056; margin: 9px 0 0; }
.d-trash { width: 37px; height: 45px; margin-top: 19px; }
.d-apps { margin-top: auto; margin-bottom: 24px; display: grid; grid-template-columns: repeat(3, 6px); gap: 6px; }
.d-apps i { width: 6px; height: 6px; background: #f3f0f2; border-radius: 1.500px; }

.viewer { width: 1846px; display: flex; flex-direction: column; background: #000; }
.viewer-bar { height: 37px; flex: none; position: relative; background: #ebebeb; border-top: 1px solid #fafafa; border-bottom: 1px solid #b9b9b9; display: flex; align-items: center; justify-content: center; color: #3a3a3a; }
.viewer-title { font: 700 14px "Noto Sans", sans-serif; }
.viewer-btns { position: absolute; right: 7px; top: 6px; display: flex; gap: 12px; }
.viewer-btns i { width: 22px; height: 22px; border-radius: 50%; background: #d9d9d9; display: flex; align-items: center; justify-content: center; }
.screen { position: relative; width: 1694px; height: 953px; margin-left: 76px; display: flex; flex-direction: column; background: #f0f0f0; }
.peek { position: absolute; left: 679px; top: 0; width: 335px; height: 3px; display: flex; background: #fff; border: 1px solid #000; border-top: 0; z-index: 2; }
.peek b { width: 133px; border-right: 1px solid #888; }
.peek b + b { width: 101px; }
.peek b:last-child { border: 0; }

.pi-panel { height: 48px; flex: none; display: flex; align-items: center; background: #eeebe9; border-bottom: 1px solid #c0c5c8; color: #222; font-size: 22px; font-weight: 300; }
.pi-menu { width: 42px; height: 42px; margin-left: 9px; border-radius: 50%; border: 2px solid #c2c2c2; background: #f3f3f3; display: flex; align-items: center; justify-content: center; }
.globe { width: 40px; height: 40px; margin-left: 20px; }
.folders { width: 43px; height: 35px; margin-left: 11px; }
.term-a { width: 43px; height: 36px; margin-left: 8px; }
.term-b { width: 43px; height: 36px; margin-left: 19px; }
.pi-text { margin-left: 1px; padding-top: 2px; }
.task { margin-left: 42px; width: 264px; height: 47px; background: #d6d6d0; display: flex; align-items: center; padding-left: 4px; gap: 2px; font-weight: 400; }
.task span { font-weight: 300; color: #111; padding-top: 2px; }
.pi-tray { margin-left: auto; display: flex; align-items: center; padding-right: 24px; }
.tray-vnc { width: 48px; height: 47px; margin-right: 8px; background: #1d1f24; border: 3px solid #1570d6; border-radius: 2px; color: #5889d8; display: flex; align-items: center; justify-content: center; }
.bt { margin-left: 22px; }
.wifi { margin-left: 27px; }
.vol { margin-left: 18px; }
.clock { margin-left: 28px; font-weight: 300; padding-top: 2px; }

.ff-title { position: relative; height: 37px; flex: none; background: #849199; border-bottom: 1px solid #a3adb3; display: flex; align-items: center; justify-content: center; color: #e8ebed; font-size: 22px; font-weight: 300; }
.ff-ctl { position: absolute; right: 12px; top: 12px; display: flex; gap: 20px; }
.ff-tabs { height: 58px; flex: none; border-bottom: 1px solid #a6a6a6; display: flex; align-items: center; font-size: 22px; font-weight: 300; color: #3f464a; }
.ff-tab { display: flex; align-items: center; height: 48px; padding-top: 1px; }
.first { padding-left: 13px; width: 298px; }
.second { padding-left: 13px; width: 300px; }
.third { padding-left: 12px; width: 293px; background: #f1f1f1; border-radius: 5px; box-shadow: 0 0 4px #0006; margin-top: -1px; padding-top: 2px; }
.nr { width: 22px; height: 22px; color: #9b2b33; background: #fafafa; margin-right: 7px; display: flex; align-items: center; justify-content: center; }
.nr.red { background: #8c0c10; color: #f3dede; }
.x { width: 12px; height: 12px; color: #444; margin: 0 18px 0 auto; }
.second .x { margin-right: 21px; }
.third .x { margin-right: 16px; }
.gicon { width: 21px; height: 24px; margin-right: 6px; }
.fade { width: 231px; margin-right: -8px; -webkit-mask-image: linear-gradient(90deg, #000 78%, transparent 98%); mask-image: linear-gradient(90deg, #000 78%, transparent 98%); }
.plus { width: 16px; height: 16px; margin-left: 20px; }

.ff-nav { height: 54px; flex: none; display: flex; align-items: center; border-bottom: 1px solid #a9a9a9; font-size: 22px; }
.n-back { width: 20px; height: 18px; margin-left: 22px; }
.n-fwd { width: 20px; height: 18px; margin-left: 27px; }
.n-rel { width: 20px; height: 20px; margin-left: 28px; }
.url { width: 1164px; height: 42px; margin-left: 152px; background: #fff; border: 1.500px solid #c6c7c0; border-radius: 5px; display: flex; align-items: center; padding: 1px 8px 0 9px; }
.u-shield { width: 20px; height: 22px; }
.u-lock { width: 20px; height: 22px; margin: 0 14px 0 18px; }
.host { color: #1b1b1b; font-weight: 300; padding-top: 1px; }
.path { color: #808080; font-weight: 300; padding-top: 1px; }
.u-star { width: 24px; height: 24px; margin-left: auto; }
.pocket { width: 20px; height: 18px; margin-left: 151px; }
.burger { width: 17px; height: 14px; margin-left: 30px; }

.grafana { position: relative; height: 756px; flex: none; display: flex; background: #111218; color: #8d8e99; font-size: 19.600px; overflow: hidden; border-top: 1px solid #222; }
.side { position: relative; width: 76px; height: 756px; flex: none; background: #181b1f; border-right: 1px solid #24272c; padding-top: 10.500px; overflow: visible; }
.slot { position: relative; height: 63.400px; display: flex; align-items: center; justify-content: center; padding-right: 1px; color: #9595a1; }
.slot.logo { padding-bottom: 2px; }
.slot.on { color: #ccccdc; }
.slot.on::before { content: ""; position: absolute; left: 10.500px; top: 15.500px; width: 5.500px; height: 32px; border-radius: 2px; background: linear-gradient(#ff8833, #f55f3e); }
.side-gap { height: 99.600px; }
.expand { position: absolute; left: 58px; top: 56px; width: 32px; height: 32px; border-radius: 50%; background: #22252b; display: flex; align-items: center; justify-content: center; z-index: 2; }
.page { width: 1618px; height: 755px; display: flex; flex-direction: column; padding-left: 21px; }
.head { display: flex; padding: 53px 0 0 26px; height: 158px; flex: none; color: #95969f; }
.head-text { margin: -2px 0 0 26px; display: flex; flex-direction: column; align-items: flex-start; }
h1 { margin: 0; font-size: 32px; font-weight: 400; line-height: 40px; color: #ccccdc; }
p { margin: 2px 0 0; line-height: 24px; color: #858690; }
.tabs { display: flex; height: 46px; flex: none; padding-left: 21px; }
.tab { position: relative; display: flex; align-items: center; height: 46px; padding: 0 20px 4px 22px; margin-right: 1px; }
.tab svg { margin: 3px 11px 0 0; width: 20px; height: 20px; }
.tab.active { color: #ccccdc; font-weight: 500; padding-right: 22px; margin-right: 0; }
.tab.active::after { content: ""; position: absolute; left: 0; bottom: 0; width: 137px; height: 5px; border-radius: 2px; background: linear-gradient(90deg, #ff8833, #f55f3e); }
.panel { position: relative; width: 1576px; height: 443px; flex: none; background: #181b1f; border: 1px solid #222529; padding: 33px 32px 0; }
.row-search { display: flex; height: 42px; }
.input { width: 1377px; border: 1px solid #2b2d33; border-radius: 2px; background: #111218; padding-left: 11px; line-height: 41px; color: #7d7e88; }
.new { width: 101px; margin-left: 32px; border: 0; border-radius: 2px; background: #3d71d9; color: #fff; font: 500 19.600px Roboto, sans-serif; display: flex; align-items: center; padding: 0 0 0 21px; gap: 5px; }
.row-filter { display: flex; align-items: center; height: 42px; margin-top: 34px; }
.select { width: 238px; height: 42px; border: 1px solid #2b2d33; border-radius: 2px; background: #111218; display: flex; align-items: center; padding: 0 15px 0 12px; color: #858691; }
.select span { margin-left: 9px; }
.end { margin: 3px 0 0 auto; color: #a0a0ac; }
.check { width: 21px; height: 21px; flex: none; background: #111218; border: 1px solid #2a2c32; border-radius: 2px; }
.row-filter .check { margin: -2px 0 0 21px; }
.starred { margin: 1px 0 0 11px; font-size: 16.500px; font-weight: 500; color: #ccccdc; }
.toggle { width: 151px; height: 42px; margin-left: 675px; border: 1px solid #2b2d33; border-radius: 2px; display: flex; padding: 3px; color: #a3a3ae; }
.seg { width: 72px; height: 34px; display: flex; align-items: center; justify-content: center; padding: 3px 8px 0 0; }
.seg.sel { background: #282b33; border-radius: 2px; color: #ccccdc; }
.sort { width: 317px; height: 42px; margin-left: 21px; border: 1px solid #2b2d33; border-radius: 2px; background: #111218; display: flex; align-items: center; padding-left: 13px; color: #8d8e99; }
.sort span { margin-left: 8px; }
.results { margin-top: 22px; height: 152px; border: 1px solid #2d3036; width: 1510px; }
.group { display: flex; align-items: center; height: 63px; padding-left: 16px; }
.group svg { margin: 0 10px 0 11px; }
.item { margin-left: 42px; width: 1434px; height: 78px; background: #21242c; border-radius: 2px; display: flex; padding: 0 0 0 22px; }
.item .check { margin-top: 29px; }
.item-text { margin: 13px 0 0 31px; }
strong { font-weight: 500; line-height: 24px; color: #ccccdc; }
.sub { display: flex; align-items: center; margin-top: 9px; font-size: 17px; line-height: 22px; gap: 5px; padding-left: 1px; }
.dropdown { position: absolute; left: 1366px; top: 86px; width: 176px; height: 137px; background: #181b1f; padding-top: 5px; box-shadow: 0 13px 20px 1px #01040999, 0 0 20px 8px #01040966; }
.opt { height: 42.400px; line-height: 43.500px; padding-left: 21px; color: #bfc0cd; }
.opt.hover { background: #34363b; }
.foot { display: flex; align-items: center; margin: 63px 0 0 258px; font-size: 17px; line-height: 22px; color: #85868c; }
.foot svg { margin: 2px 5px 0 0; }
.foot em { width: 29.500px; padding-left: 14.500px; }
.link-tip { position: absolute; left: 0; bottom: 0; width: 365px; height: 35px; background: #f0f0f0; border: 1px solid #aaa; border-left: 0; border-bottom: 0; border-top-right-radius: 5px; padding: 1px 0 0 5px; line-height: 33px; font-size: 22px; font-weight: 300; color: #3f464a; z-index: 3; }

.vm-status { height: 20px; flex: none; background: #f0f0f0; border-bottom: 1px solid #bdbdbd; display: flex; align-items: center; justify-content: flex-end; gap: 3px; padding: 2px 1.500px 0 0; font: 11px "Open Sans", sans-serif; color: #111; }
</style>
